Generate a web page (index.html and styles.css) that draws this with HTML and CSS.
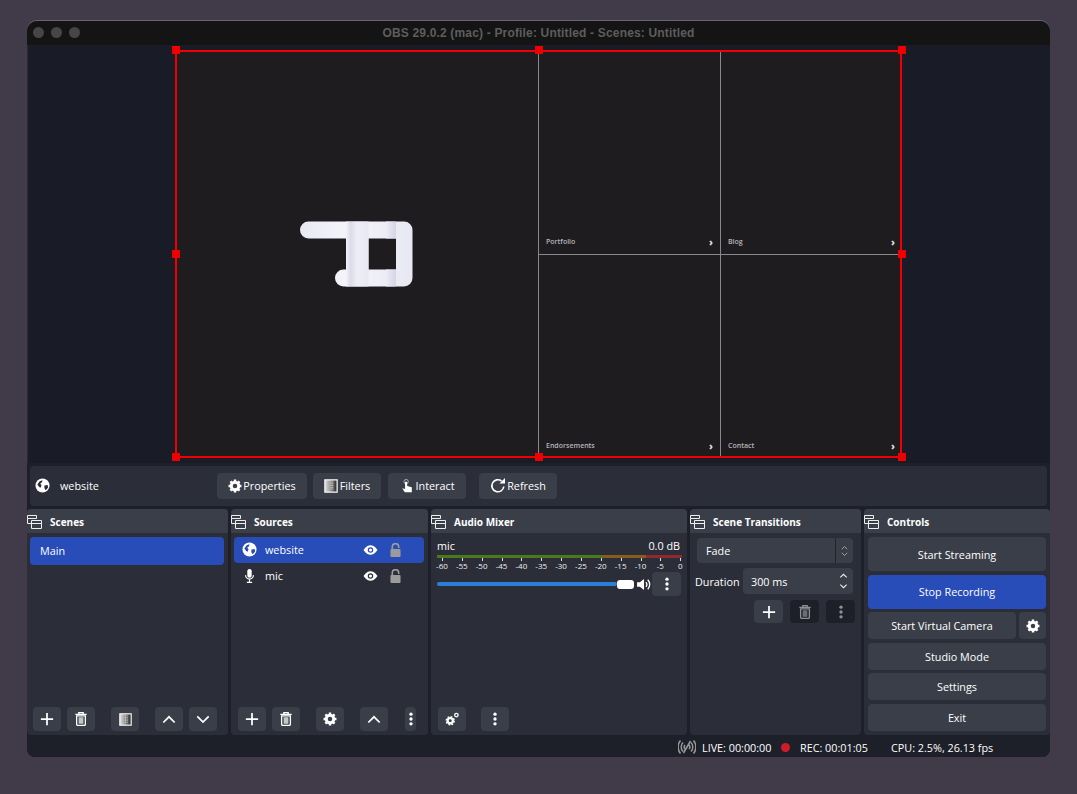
FILE: index.html
```html
<!DOCTYPE html>
<html lang="en">
<head>
    <meta charset="UTF-8">
    <meta name="viewport" content="width=device-width, initial-scale=1.0">
    <title>OBS 29.0.2 (mac)</title>
    <link rel="stylesheet" href="styles.css">
</head>
<body>
    <!-- shared icons -->
    <svg class="sprites" width="0" height="0">
        <symbol id="i-plus" viewBox="0 0 16 16"><path d="M8 1v14M1 8h14" fill="none" stroke="currentColor" stroke-width="2"/></symbol>
        <symbol id="i-trash" viewBox="0 0 16 16"><path d="M1.500 2.800h13M5.500 2.500V.8h5v1.700" fill="none" stroke="currentColor" stroke-width="1.500"/><path d="M3 4.500h10v9.500a1.300 1.300 0 0 1-1.300 1.300H4.300A1.300 1.300 0 0 1 3 14z" fill="none" stroke="currentColor" stroke-width="1.500"/><path d="M5.300 6h5.400v7.500H5.300z" fill="currentColor" opacity=".7"/></symbol>
        <symbol id="i-up" viewBox="0 0 16 16"><path d="M1.500 12 8 5.500l6.500 6.500" fill="none" stroke="currentColor" stroke-width="2"/></symbol>
        <symbol id="i-down" viewBox="0 0 16 16"><path d="M1.500 5 8 11.500 14.500 5" fill="none" stroke="currentColor" stroke-width="2"/></symbol>
        <symbol id="i-dots" viewBox="0 0 16 16"><circle cx="8" cy="2.500" r="1.900" fill="currentColor"/><circle cx="8" cy="8" r="1.900" fill="currentColor"/><circle cx="8" cy="13.500" r="1.900" fill="currentColor"/></symbol>
        <symbol id="i-gear" viewBox="0 0 16 16"><circle cx="8" cy="8" r="4.300" fill="none" stroke="currentColor" stroke-width="3.400"/><path d="M8 .6v14.800M.6 8h14.800M2.800 2.800l10.400 10.400M13.200 2.800 2.800 13.200" fill="none" stroke="currentColor" stroke-width="2.800"/><circle cx="8" cy="8" r="2.600" fill="var(--hole, #3a3e49)"/></symbol>
        <symbol id="i-filter" viewBox="0 0 16 16"><defs><linearGradient id="fade"><stop offset="0" stop-color="#ddd"/><stop offset=".35" stop-color="#aaa"/><stop offset="1" stop-color="#222"/></linearGradient></defs><rect x="1" y="1" width="14" height="14" fill="url(#fade)" stroke="#f2f2f2" stroke-width="1.500"/><path d="M8 3v10M10 3v10" stroke="#eee" stroke-width="1" stroke-dasharray="1 1"/></symbol>
        <symbol id="i-globe" viewBox="0 0 16 16"><circle cx="8" cy="8" r="7.500" fill="currentColor"/><path d="M2.500 7 5 3.500l3-1-.5 2L5.500 6l1.500 1.500-1 3-1.500-1zM10 8l3.500-.5.500 2.500-2.500 3-1.500-2z" fill="var(--hole, #2b2e38)"/></symbol>
        <symbol id="i-dock" viewBox="0 0 15 14"><path d="M.5.500h9v3h-9zM.5 3.500v5h4M4.500 5.500h10v8h-10zM4.500 8.500h10" fill="none" stroke="currentColor"/></symbol>
        <symbol id="i-eye" viewBox="0 0 16 11"><path d="M.3 5.500C3 1.500 5.500.2 8 .2s5 1.300 7.700 5.300C13 9.500 10.500 10.800 8 10.800S3 9.500.3 5.500z" fill="currentColor"/><circle cx="8" cy="5.500" r="3" fill="var(--hole, #2b2e38)"/><circle cx="8" cy="5.500" r="1.700" fill="currentColor"/></symbol>
        <symbol id="i-lock" viewBox="0 0 12 15"><path d="M2.500 7V4a3.500 3.500 0 0 1 7 0v1.200" fill="none" stroke="currentColor" stroke-width="1.800"/><rect x=".5" y="6.500" width="11" height="8.500" rx="1" fill="currentColor"/></symbol>
        <symbol id="i-mic" viewBox="0 0 12 16"><rect x="3.500" y="0" width="5" height="10" rx="2.500" fill="currentColor"/><path d="M1.500 7a4.500 4.500 0 0 0 9 0M6 11.500V15M3 15.300h6" fill="none" stroke="currentColor" stroke-width="1.300"/></symbol>
    </svg>

    <div class="window">
        <header class="titlebar">
            <div class="lights"><i></i><i></i><i></i></div>
            <span>OBS 29.0.2 (mac) - Profile: Untitled - Scenes: Untitled</span>
        </header>

        <section class="preview">
            <div class="stage">
                <div class="stage-left">
                    <svg class="logo" width="114" height="66" viewBox="0 0 114 66">
                        <defs>
                            <linearGradient id="lg-bar" x1="0" x2="1"><stop offset="0" stop-color="#e9e9f3"/><stop offset=".4" stop-color="#f4f4fa"/><stop offset="1" stop-color="#e8e8f3"/></linearGradient>
                            <linearGradient id="lg-band" x1="0" x2="1"><stop offset="0" stop-color="#f3f3f9"/><stop offset=".2" stop-color="#dcdce9"/><stop offset=".5" stop-color="#eeeef7"/><stop offset="1" stop-color="#e8e8f3"/></linearGradient>
                            <linearGradient id="lg-edge" x1="0" x2="1"><stop offset="0" stop-color="#ecedf6"/><stop offset="1" stop-color="#d4d4e4"/></linearGradient>
                        </defs>
                        <path fill="url(#lg-bar)" fill-rule="evenodd" d="M8.500 .5H104a8.500 8.500 0 0 1 8.500 8.500v48a8.500 8.500 0 0 1-8.500 8.500H43.500a8.500 8.500 0 0 1 0-17h24V17.500H8.500a8.500 8.500 0 0 1 0-17zM96 17.500H68.500v31H96z"/>
                        <rect x="46" y=".5" width="22.500" height="65" fill="url(#lg-band)"/>
                        <rect x="86" y=".5" width="10" height="17" fill="url(#lg-edge)"/>
                        <rect x="86" y="48.500" width="10" height="17" fill="url(#lg-edge)"/>
                    </svg>
                </div>
                <div class="stage-grid">
                    <a class="cell"><span>Portfolio</span><b>›</b></a>
                    <a class="cell"><span>Blog</span><b>›</b></a>
                    <a class="cell"><span>Endorsements</span><b>›</b></a>
                    <a class="cell"><span>Contact</span><b>›</b></a>
                </div>
                <i class="handle tl"></i><i class="handle tc"></i><i class="handle tr"></i>
                <i class="handle ml"></i><i class="handle mr"></i>
                <i class="handle bl"></i><i class="handle bc"></i><i class="handle br"></i>
            </div>
        </section>

        <section class="context">
            <div class="context-name">
                <svg class="icon15"><use href="#i-globe"/></svg>
                <span>website</span>
            </div>
            <button class="ctx-btn w-props"><svg class="icon14"><use href="#i-gear"/></svg>Properties</button>
            <button class="ctx-btn w-filters"><svg class="icon14"><use href="#i-filter"/></svg>Filters</button>
            <button class="ctx-btn w-interact">
                <svg class="icon14" viewBox="0 0 14 16"><circle cx="6" cy="3" r="2.500" fill="none" stroke="#bbb" stroke-width="1"/><path d="M4.800 3h2.400v5l5.300 1.500V15H4.500L1.500 10.500l3.300 1z" fill="currentColor"/></svg>Interact
            </button>
            <button class="ctx-btn w-refresh">
                <svg class="icon16" viewBox="0 0 16 16"><path d="M13.800 8.500A6 6 0 1 1 11.500 3" fill="none" stroke="currentColor" stroke-width="1.600"/><path d="M9.500 5.500h5.500V0z" fill="currentColor"/></svg>Refresh
            </button>
        </section>

        <section class="docks">
            <div class="dock d-scenes">
                <h2 class="dock-title"><svg class="dock-icon"><use href="#i-dock"/></svg>Scenes</h2>
                <div class="dock-body">
                    <div class="row selected scene-row">Main</div>
                </div>
                <div class="toolbar">
                    <button class="tool"><svg><use href="#i-plus"/></svg></button>
                    <button class="tool"><svg><use href="#i-trash"/></svg></button>
                    <button class="tool sep"><svg class="small"><use href="#i-filter"/></svg></button>
                    <button class="tool sep"><svg><use href="#i-up"/></svg></button>
                    <button class="tool"><svg><use href="#i-down"/></svg></button>
                </div>
            </div>

            <div class="dock d-sources">
                <h2 class="dock-title"><svg class="dock-icon"><use href="#i-dock"/></svg>Sources</h2>
                <div class="dock-body">
                    <div class="row selected source-row">
                        <svg class="icon15 src-icon"><use href="#i-globe"/></svg>
                        <span class="src-name">website</span>
                        <svg class="eye"><use href="#i-eye"/></svg>
                        <svg class="lock"><use href="#i-lock"/></svg>
                    </div>
                    <div class="row source-row">
                        <svg class="icon15 src-icon mic"><use href="#i-mic"/></svg>
                        <span class="src-name">mic</span>
                        <svg class="eye"><use href="#i-eye"/></svg>
                        <svg class="lock"><use href="#i-lock"/></svg>
                    </div>
                </div>
                <div class="toolbar">
                    <button class="tool"><svg><use href="#i-plus"/></svg></button>
                    <button class="tool"><svg><use href="#i-trash"/></svg></button>
                    <button class="tool sep"><svg><use href="#i-gear"/></svg></button>
                    <button class="tool sep"><svg><use href="#i-up"/></svg></button>
                    <button class="tool narrow"><svg><use href="#i-dots"/></svg></button>
                </div>
            </div>

            <div class="dock d-mixer">
                <h2 class="dock-title"><svg class="dock-icon"><use href="#i-dock"/></svg>Audio Mixer</h2>
                <div class="dock-body mixer">
                    <div class="mixer-head"><span>mic</span><span>0.0 dB</span></div>
                    <div class="meter"></div>
                    <div class="scale">
                        <span>-60</span><span>-55</span><span>-50</span><span>-45</span><span>-40</span><span>-35</span><span>-30</span><span>-25</span><span>-20</span><span>-15</span><span>-10</span><span>-5</span><span>0</span>
                    </div>
                    <div class="volume">
                        <div class="slider"><i></i></div>
                        <svg class="speaker" viewBox="0 0 16 14"><path d="M0 4.500h3L7.500 1v12L3 9.500H0z" fill="currentColor"/><path d="M9.500 4.500a3.500 3.500 0 0 1 0 5M11.500 2a7 7 0 0 1 0 10" fill="none" stroke="currentColor" stroke-width="1.500"/></svg>
                        <button class="tool mixer-menu"><svg><use href="#i-dots"/></svg></button>
                    </div>
                </div>
                <div class="toolbar">
                    <button class="tool">
                        <svg viewBox="0 0 16 16"><circle cx="6" cy="10" r="3" fill="none" stroke="currentColor" stroke-width="2.600"/><circle cx="6" cy="10" r="4.600" fill="none" stroke="currentColor" stroke-width="1.600" stroke-dasharray="2 1.600"/><circle cx="13" cy="3.500" r="2" fill="none" stroke="currentColor" stroke-width="1.500"/></svg>
                    </button>
                    <button class="tool sep-wide"><svg><use href="#i-dots"/></svg></button>
                </div>
            </div>

            <div class="dock d-trans">
                <h2 class="dock-title"><svg class="dock-icon"><use href="#i-dock"/></svg>Scene Transitions</h2>
                <div class="dock-body trans">
                    <div class="combo">
                        <span>Fade</span>
                        <div class="combo-arrows"><svg viewBox="0 0 10 14"><path d="M2 5l3-3 3 3M2 9l3 3 3-3" fill="none" stroke="#aaa" stroke-width="1"/></svg></div>
                    </div>
                    <div class="duration">
                        <label>Duration</label>
                        <div class="spin">
                            <span>300 ms</span>
                            <svg viewBox="0 0 10 18"><path d="M1.500 5l3.500-3.500L8.500 5M1.500 13l3.500 3.500 3.500-3.500" fill="none" stroke="#eee" stroke-width="1.200"/></svg>
                        </div>
                    </div>
                    <div class="trans-tools">
                        <button class="tool wide"><svg><use href="#i-plus"/></svg></button>
                        <button class="tool wide off"><svg><use href="#i-trash"/></svg></button>
                        <button class="tool wide off"><svg><use href="#i-dots"/></svg></button>
                    </div>
                </div>
            </div>

            <div class="dock d-controls">
                <h2 class="dock-title"><svg class="dock-icon"><use href="#i-dock"/></svg>Controls</h2>
                <div class="dock-body controls">
                    <button class="ctl tall">Start Streaming</button>
                    <button class="ctl tall active">Stop Recording</button>
                    <div class="ctl-row">
                        <button class="ctl grow">Start Virtual Camera</button>
                        <button class="ctl square"><svg class="icon14"><use href="#i-gear"/></svg></button>
                    </div>
                    <button class="ctl">Studio Mode</button>
                    <button class="ctl">Settings</button>
                    <button class="ctl">Exit</button>
                </div>
            </div>
        </section>

        <footer class="status">
            <svg class="signal" viewBox="0 0 18 14"><path d="M5 2.500a6.500 6.500 0 0 0 0 9M13 2.500a6.500 6.500 0 0 1 0 9M2.500.500a10 10 0 0 0 0 13M15.500.500a10 10 0 0 1 0 13M5.500 13 12.500 1M7 5a3 3 0 0 0 0 4M11 5a3 3 0 0 1 0 4" fill="none" stroke="#999" stroke-width="1.500"/></svg>
            <span class="st-live">LIVE: 00:00:00</span>
            <i class="rec-dot"></i>
            <span class="st-rec">REC: 00:01:05</span>
            <span class="st-cpu">CPU: 2.5%, 26.13 fps</span>
        </footer>
    </div>
</body>
</html>
```

FILE: styles.css
```css
* {
    box-sizing: border-box;
}
body {
    margin: 0;
    height: 794px;
    padding: 21px 27px 0 27px;
    overflow: hidden;
    background: #413b49;
    font-family: "Open Sans", "Liberation Sans", sans-serif;
    font-size: 10.8px;
    color: #fff;
}
button {
    font-family: inherit;
    font-size: 10.8px;
    color: #fff;
    border: none;
    padding: 0;
}
svg {
    display: block;
    flex: none;
}
.sprites {
    position: absolute;
}
.icon14 {
    width: 14px;
    height: 14px;
}
.icon15 {
    width: 15px;
    height: 15px;
}
.icon16 {
    width: 16px;
    height: 16px;
}

.window {
    width: 1023px;
    height: 736px;
    display: flex;
    flex-direction: column;
    border-radius: 10px 10px 8px 8px;
    overflow: hidden;
    background: #1d1f29;
    box-shadow: 0 -1px 0 #6a6670;
}

/* title bar */
.titlebar {
    height: 24px;
    flex: none;
    display: flex;
    align-items: center;
    justify-content: center;
    position: relative;
    background: #141414;
    color: #5d5d5d;
    font-size: 12px;
    font-weight: 700;
    letter-spacing: .17px;
    font-family: "Liberation Sans", sans-serif;
}
.lights {
    position: absolute;
    left: 6px;
    top: 6px;
    display: flex;
    gap: 7px;
}
.lights i {
    width: 11px;
    height: 11px;
    border-radius: 50%;
    background: #464646;
}

/* preview */
.preview {
    height: 418px;
    flex: none;
    padding-top: 6px;
    padding-left: 148px;
    border-left: 1px solid #2a2b33;
    background: #191c26;
}
.stage {
    position: relative;
    width: 725px;
    height: 406px;
    display: flex;
    background: #1f1c20;
    outline: 2px solid #f00000;
    outline-offset: -1px;
}
.stage-left {
    width: 362px;
    flex: none;
    padding: 170px 0 0 124px;
}
.stage-grid {
    flex: 1;
    display: grid;
    grid-template-columns: 182px 181px;
    grid-template-rows: 204px 202px;
    border-left: 1px solid #8a888c;
}
.cell {
    display: flex;
    align-items: flex-end;
    justify-content: space-between;
    padding: 0 7px 7px 7px;
    font-size: 7px;
    font-weight: 600;
    color: #b5b4b8;
    line-height: 10px;
}
.cell b {
    font-size: 10px;
    line-height: 8px;
    padding-bottom: 1px;
    color: #ddd;
}
.cell:nth-child(-n+2) {
    border-bottom: 1px solid #8a888c;
}
.cell:nth-child(n+3) {
    padding-bottom: 6px;
}
.cell:nth-child(odd) {
    border-right: 1px solid #8a888c;
}
.handle {
    position: absolute;
    width: 8px;
    height: 8px;
    background: #f00000;
}
.tl { left: -4px; top: -5px; }
.tc { left: 359px; top: -5px; }
.tr { right: -5px; top: -5px; }
.ml { left: -4px; top: 199px; }
.mr { right: -5px; top: 199px; }
.bl { left: -4px; bottom: -4px; }
.bc { left: 359px; bottom: -4px; }
.br { right: -5px; bottom: -4px; }

/* source context bar */
.context {
    height: 40px;
    flex: none;
    margin: 3px 3px 3px 3px;
    display: flex;
    align-items: center;
    border-radius: 4px;
    background: #2b2e38;
    padding-left: 5px;
}
.context-name {
    width: 182px;
    flex: none;
    display: flex;
    align-items: center;
    gap: 10px;
    padding-bottom: 1px;
}
.ctx-btn {
    height: 26px;
    display: flex;
    align-items: center;
    justify-content: center;
    gap: 1px;
    border-radius: 4px;
    background: #3a3e49;
    --hole: #3a3e49;
    padding-bottom: 1px;
}
.w-props { width: 90px; margin-right: 6px; }
.w-filters { width: 68px; margin-right: 7px; gap: 2px; }
.w-interact { width: 78px; margin-right: 13px; gap: 2px; }
.w-refresh { width: 78px; }

/* docks */
.docks {
    height: 226px;
    flex: none;
    display: flex;
    gap: 3px;
}
.dock {
    display: flex;
    flex-direction: column;
    background: #2b2e38;
    border-radius: 4px;
}
.d-scenes { width: 201px; }
.d-sources { width: 197px; }
.d-mixer { width: 256px; }
.d-trans { width: 171px; }
.d-controls { width: 186px; }
.dock-title {
    height: 24px;
    flex: none;
    margin: 0;
    padding-top: 1px;
    display: flex;
    align-items: center;
    gap: 8px;
    border-radius: 4px 4px 0 0;
    background: #3a3e49;
    font-size: 10px;
    font-weight: 700;
}
.dock-icon {
    width: 15px;
    height: 14px;
    color: #eee;
}
.dock-body {
    flex: 1;
    padding: 4px 4px 4px 3px;
    min-height: 0;
}
.row {
    display: flex;
    align-items: center;
    border-radius: 4px;
}
.selected {
    background: #284cb8;
    --hole: #284cb8;
}
.scene-row {
    height: 28px;
    padding-left: 10px;
    padding-bottom: 2px;
}
.source-row {
    height: 26px;
    padding-bottom: 1px;
    color: #fff;
}
.src-icon {
    margin-left: 8px;
}
.src-name {
    margin-left: 8px;
    flex: 1;
}
.eye {
    width: 15px;
    height: 10px;
}
.lock {
    width: 11px;
    height: 14px;
    margin: 0 23px 0 12px;
    color: #9b9b9b;
}
.mic {
    height: 14px;
}

/* bottom toolbars */
.toolbar {
    height: 28px;
    flex: none;
    display: flex;
    gap: 6px;
    padding-left: 6px;
    padding-bottom: 4px;
}
.tool {
    width: 28px;
    height: 24px;
    flex: none;
    display: flex;
    align-items: center;
    justify-content: center;
    border-radius: 4px;
    background: #3a3e49;
    --hole: #3a3e49;
}
.tool svg {
    width: 14px;
    height: 14px;
}
.tool svg.small {
    width: 13px;
    height: 13px;
}
.tool.sep {
    margin-left: 10px;
}
.tool.sep-wide {
    margin-left: 9px;
}
.tool.narrow {
    width: 11px;
    margin-left: 11px;
}
.d-sources .toolbar,
.d-mixer .toolbar {
    padding-left: 7px;
}

/* audio mixer */
.mixer {
    padding: 5px 7px 0 6px;
}
.mixer-head {
    display: flex;
    justify-content: space-between;
    line-height: 16px;
}
.meter {
    height: 3px;
    margin: 1px -2px 0 0;
    background: linear-gradient(90deg, #4a7a1c 0, #4a7a1c 67.3%, #8a5c1c 67.3%, #8a5c1c 85.4%, #8f2a30 85.4%);
}
.scale {
    display: grid;
    grid-template-columns: repeat(13, 19.86px);
    height: 12px;
    margin: 0 0 0 -5px;
    padding-top: 3px;
    font-size: 8px;
    line-height: 10px;
    text-align: center;
    color: #eee;
}
.scale span {
    position: relative;
}
/* major tick above each label */
.scale span::before {
    content: "";
    position: absolute;
    left: 50%;
    top: -3px;
    width: 1px;
    height: 3px;
    background: #ddd;
}
.volume {
    display: flex;
    align-items: center;
    margin-top: 2px;
    height: 24px;
}
.slider {
    width: 180px;
    flex: none;
    position: relative;
    height: 4px;
    border-radius: 2px;
    background: #2b7fd8;
}
.slider i {
    position: absolute;
    right: -17px;
    top: -2px;
    width: 17px;
    height: 9px;
    border-radius: 3px;
    background: #fff;
}
.speaker {
    width: 15px;
    height: 13px;
    margin-left: 20px;
}
.mixer-menu {
    width: 29px;
}

/* transitions */
.trans {
    padding: 5px 8px 0 5px;
}
.combo {
    height: 25px;
    margin-left: 2px;
    display: flex;
    align-items: center;
    justify-content: space-between;
    border-radius: 4px;
    background: #3a3e49;
    padding-left: 9px;
}
.combo-arrows {
    width: 18px;
    height: 100%;
    border-left: 1px solid #22242c;
    display: flex;
    align-items: center;
    justify-content: center;
}
.combo-arrows svg {
    width: 9px;
    height: 14px;
}
.duration {
    display: flex;
    align-items: center;
    margin-top: 5px;
}
.duration label {
    width: 48px;
    flex: none;
}
.spin {
    flex: 1;
    height: 26px;
    display: flex;
    align-items: center;
    justify-content: space-between;
    border-radius: 4px;
    background: #3a3e49;
    padding: 0 5px 0 8px;
}
.spin svg {
    width: 9px;
    height: 18px;
}
.trans-tools {
    display: flex;
    justify-content: flex-end;
    gap: 7px;
    margin-top: 6px;
    margin-right: -2px;
}
.tool.wide {
    width: 29px;
    height: 23px;
}
.tool.off {
    background: #1d1f29;
    color: #8e9096;
    --hole: #1d1f29;
}

/* controls */
.controls {
    display: flex;
    flex-direction: column;
    gap: 3.5px;
    padding: 4px 4px 0 4px;
}
.ctl {
    height: 27px;
    flex: none;
    border-radius: 4px;
    background: #3a3e49;
    --hole: #3a3e49;
}
.ctl.tall {
    height: 34px;
}
.active {
    background: #284cb8;
}
.ctl-row {
    display: flex;
    gap: 3px;
}
.ctl.grow {
    flex: 1;
}
.ctl.square {
    width: 27px;
    display: flex;
    align-items: center;
    justify-content: center;
}

/* status bar */
.status {
    flex: 1;
    display: flex;
    align-items: center;
    background: #1d1f29;
    padding: 2px 0 0 651px;
}
.signal {
    width: 18px;
    height: 14px;
}
.st-live {
    margin-left: 6px;
    width: 79px;
}
.rec-dot {
    width: 9px;
    height: 9px;
    border-radius: 50%;
    background: #d01c2a;
}
.st-rec {
    margin-left: 10px;
    width: 91px;
}
```
